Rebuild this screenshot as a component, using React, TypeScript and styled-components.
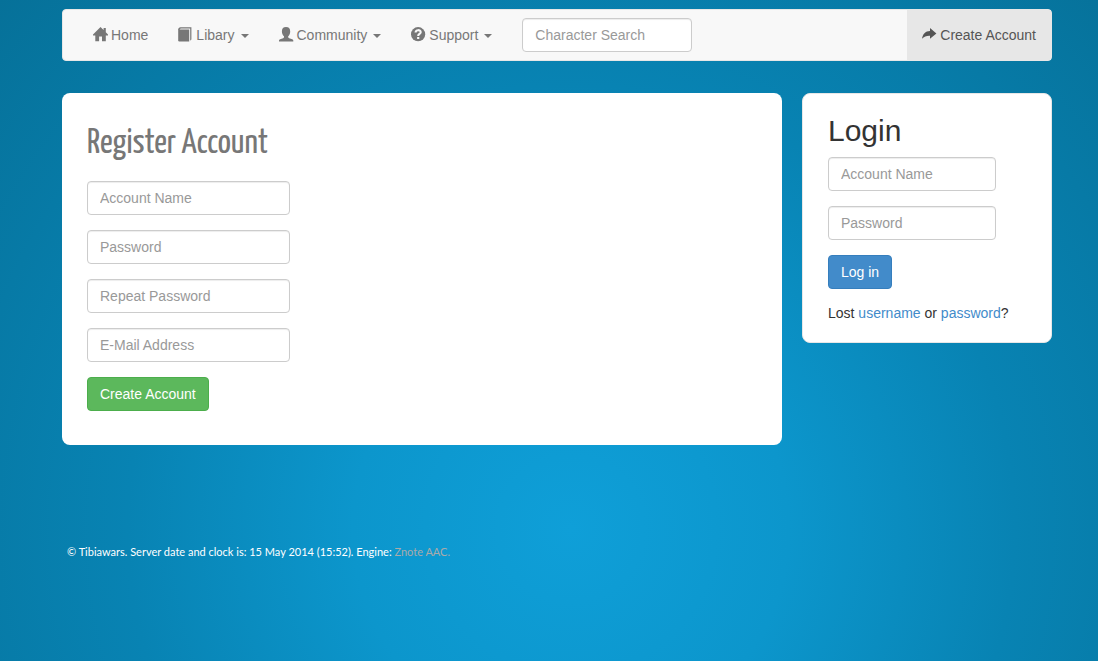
import React from "react";
import styled, { createGlobalStyle } from "styled-components";

const GlobalStyle = createGlobalStyle`
  *, *::before, *::after { box-sizing: border-box; }
  html { min-height: 100%; background: #06719a; }
  body {
    margin: 0;
    min-height: 100vh;
    background: radial-gradient(circle at 52% 80%, #0f9fd8 0%, #0c96cc 28%, #0883b3 57%, #067199 100%) no-repeat;
    color: #333;
    font: 14px/20px "Liberation Sans", Arial, sans-serif;
  }
`;

const Page = styled.div`
  padding: 9px 46px 40px 62px;
`;

const Navbar = styled.nav`
  display: flex;
  align-items: stretch;
  min-height: 52px;
  padding-left: 15px;
  border: 1px solid #e7e7e7;
  border-radius: 4px;
  background: #f8f8f8;
`;

const NavLink = styled.a<{ $active?: boolean }>`
  display: flex;
  align-items: center;
  gap: 3px;
  padding: 15px;
  color: ${(p) => (p.$active ? "#555" : "#777")};
  background: ${(p) => (p.$active ? "#e7e7e7" : "transparent")};
  text-decoration: none;
  white-space: nowrap;
`;

const NavRight = styled.div`
  display: flex;
  margin-left: auto;
`;

const NavSearch = styled.form`
  display: flex;
  align-items: center;
  padding: 0 15px;
`;

const Caret = styled.span`
  margin: 2px 0 0 3px;
  border-top: 4px solid currentColor;
  border-left: 4px solid transparent;
  border-right: 4px solid transparent;
`;

const Icon = styled.svg`
  width: 15px;
  height: 15px;
  margin-bottom: 2px;
  flex: none;
  fill: currentColor;
`;

const TextField = styled.input<{ $width: number }>`
  display: block;
  width: ${(p) => p.$width}px;
  max-width: 100%;
  height: 34px;
  padding: 6px 12px;
  border: 1px solid #ccc;
  border-radius: 4px;
  background: #fff;
  box-shadow: inset 0 1px 1px rgba(0, 0, 0, 0.075);
  color: #555;
  font: inherit;
  &::placeholder { color: #999; opacity: 1; }
`;

const Columns = styled.div`
  display: flex;
  align-items: flex-start;
  gap: 20px;
  margin-top: 32px;
`;

const MainCard = styled.main`
  flex: 1;
  min-width: 0;
  padding: 31px 25px 34px;
  border-radius: 8px;
  background: #fff;
`;

const SideCard = styled.aside`
  flex: none;
  width: 250px;
  padding: 20px 25px;
  border: 1px solid #e7e7e7;
  border-radius: 8px;
  background: #fff;
`;

const PageTitle = styled.h1`
  margin: 0 0 17px;
  color: #777;
  font: 400 35px/40px "Yanone Kaffeesatz", "Roboto Condensed", "Open Sans Condensed", Lato, sans-serif;
`;

const SideTitle = styled.h2`
  margin: 0 0 10px;
  font-size: 30px;
  line-height: 33px;
  font-weight: 400;
`;

const Form = styled.form`
  display: flex;
  flex-direction: column;
  align-items: flex-start;
  gap: 15px;
`;

const Button = styled.button<{ $tone: "success" | "primary" }>`
  height: 34px;
  padding: 6px 12px;
  border: 1px solid ${(p) => (p.$tone === "success" ? "#4cae4c" : "#357ebd")};
  border-radius: 4px;
  background: ${(p) => (p.$tone === "success" ? "#5cb85c" : "#428bca")};
  color: #fff;
  font: inherit;
  cursor: pointer;
`;

const Hint = styled.p`
  margin: 0;
  line-height: 18px;
`;

const TextLink = styled.a`
  color: #428bca;
  text-decoration: none;
`;

const Footer = styled.footer`
  margin-top: 97px;
  padding: 0 5px;
  color: #fff;
  font: 11px/20px Lato, sans-serif;
`;

const FooterLink = styled.a`
  color: #aaa;
  text-decoration: none;
`;

const HomeIcon = () => (
  <Icon viewBox="0 0 15 15" aria-hidden="true">
    <path d="M7.5 0 L10.6 3.1 V1 H12.8 V5.3 L15 7.6 V8.4 H12.8 V14.3 H9 V9.4 H6.1 V14.3 H2.3 V8.4 H0 V7.6 Z" />
  </Icon>
);

const BookIcon = () => (
  <Icon viewBox="0 0 15 15" aria-hidden="true">
    <path d="M0.2 2.6 H11.2 V14.4 H1.4 Q0.2 14.4 0.2 13.2 Z" />
    <path d="M0.2 3 Q0.2 0.3 2.6 0.3 H13.4 V12.6 L12.2 13.8 V1.5 H2.6 L1.4 3 Z" />
  </Icon>
);

const UserIcon = () => (
  <Icon viewBox="0 0 15 15" aria-hidden="true">
    <path d="M7 0 C9.8 0 11.2 1.6 11.2 4.2 C11.2 6.6 10.4 8.2 9.2 9.2 V10.2 C9.2 10.7 9.7 11 10.2 11.2 L13.2 12.3 C13.9 12.6 14.3 12.9 14.3 13.5 V14.4 H0 V13.5 C0 12.9 0.4 12.6 1.1 12.3 L4.1 11.2 C4.6 11 5 10.7 5 10.2 V9.2 C3.8 8.2 2.9 6.6 2.9 4.2 C2.9 1.6 4.3 0 7 0 Z" />
  </Icon>
);

const QuestionIcon = () => (
  <Icon viewBox="0 0 15 15" aria-hidden="true">
    <circle cx="7.1" cy="7.2" r="7.1" />
    <path d="M4.6 5.5 C4.6 2.4 9.7 2.5 9.7 5.2 C9.7 7 7.2 6.9 7.2 8.9" fill="none" stroke="#f8f8f8" strokeWidth="2.1" />
    <rect x="6.1" y="10" width="2.2" height="2" fill="#f8f8f8" />
  </Icon>
);

const ShareIcon = () => (
  <Icon viewBox="0 0 15 15" aria-hidden="true">
    <path d="M8 1 L14.4 6.4 L8 11.8 V8.8 C4.8 8.6 2.2 9.4 0 11.8 C0.6 7.2 3.4 4.1 8 4 Z" />
  </Icon>
);

export default function App() {
  return (
    <>
      <GlobalStyle />
      <Page>
        <Navbar>
          <NavLink href="#home"><HomeIcon />Home</NavLink>
          <NavLink href="#libary"><BookIcon />Libary <Caret /></NavLink>
          <NavLink href="#community"><UserIcon />Community <Caret /></NavLink>
          <NavLink href="#support"><QuestionIcon />Support <Caret /></NavLink>
          <NavSearch>
            <TextField $width={170} type="text" placeholder="Character Search" aria-label="Character Search" />
          </NavSearch>
          <NavRight>
            <NavLink $active href="#register"><ShareIcon />Create Account</NavLink>
          </NavRight>
        </Navbar>
        <Columns>
          <MainCard>
            <PageTitle>Register Account</PageTitle>
            <Form>
              <TextField $width={203} type="text" placeholder="Account Name" aria-label="Account Name" />
              <TextField $width={203} type="password" placeholder="Password" aria-label="Password" />
              <TextField $width={203} type="password" placeholder="Repeat Password" aria-label="Repeat Password" />
              <TextField $width={203} type="email" placeholder="E-Mail Address" aria-label="E-Mail Address" />
              <Button $tone="success" type="button">Create Account</Button>
            </Form>
          </MainCard>
          <SideCard>
            <SideTitle>Login</SideTitle>
            <Form>
              <TextField $width={168} type="text" placeholder="Account Name" aria-label="Login account name" />
              <TextField $width={168} type="password" placeholder="Password" aria-label="Login password" />
              <Button $tone="primary" type="button">Log in</Button>
              <Hint>
                Lost <TextLink href="#username">username</TextLink> or <TextLink href="#password">password</TextLink>?
              </Hint>
            </Form>
          </SideCard>
        </Columns>
        <Footer>
          © Tibiawars. Server date and clock is: 15 May 2014 (15:52). Engine: <FooterLink href="#engine">Znote AAC.</FooterLink>
        </Footer>
      </Page>
    </>
  );
}
